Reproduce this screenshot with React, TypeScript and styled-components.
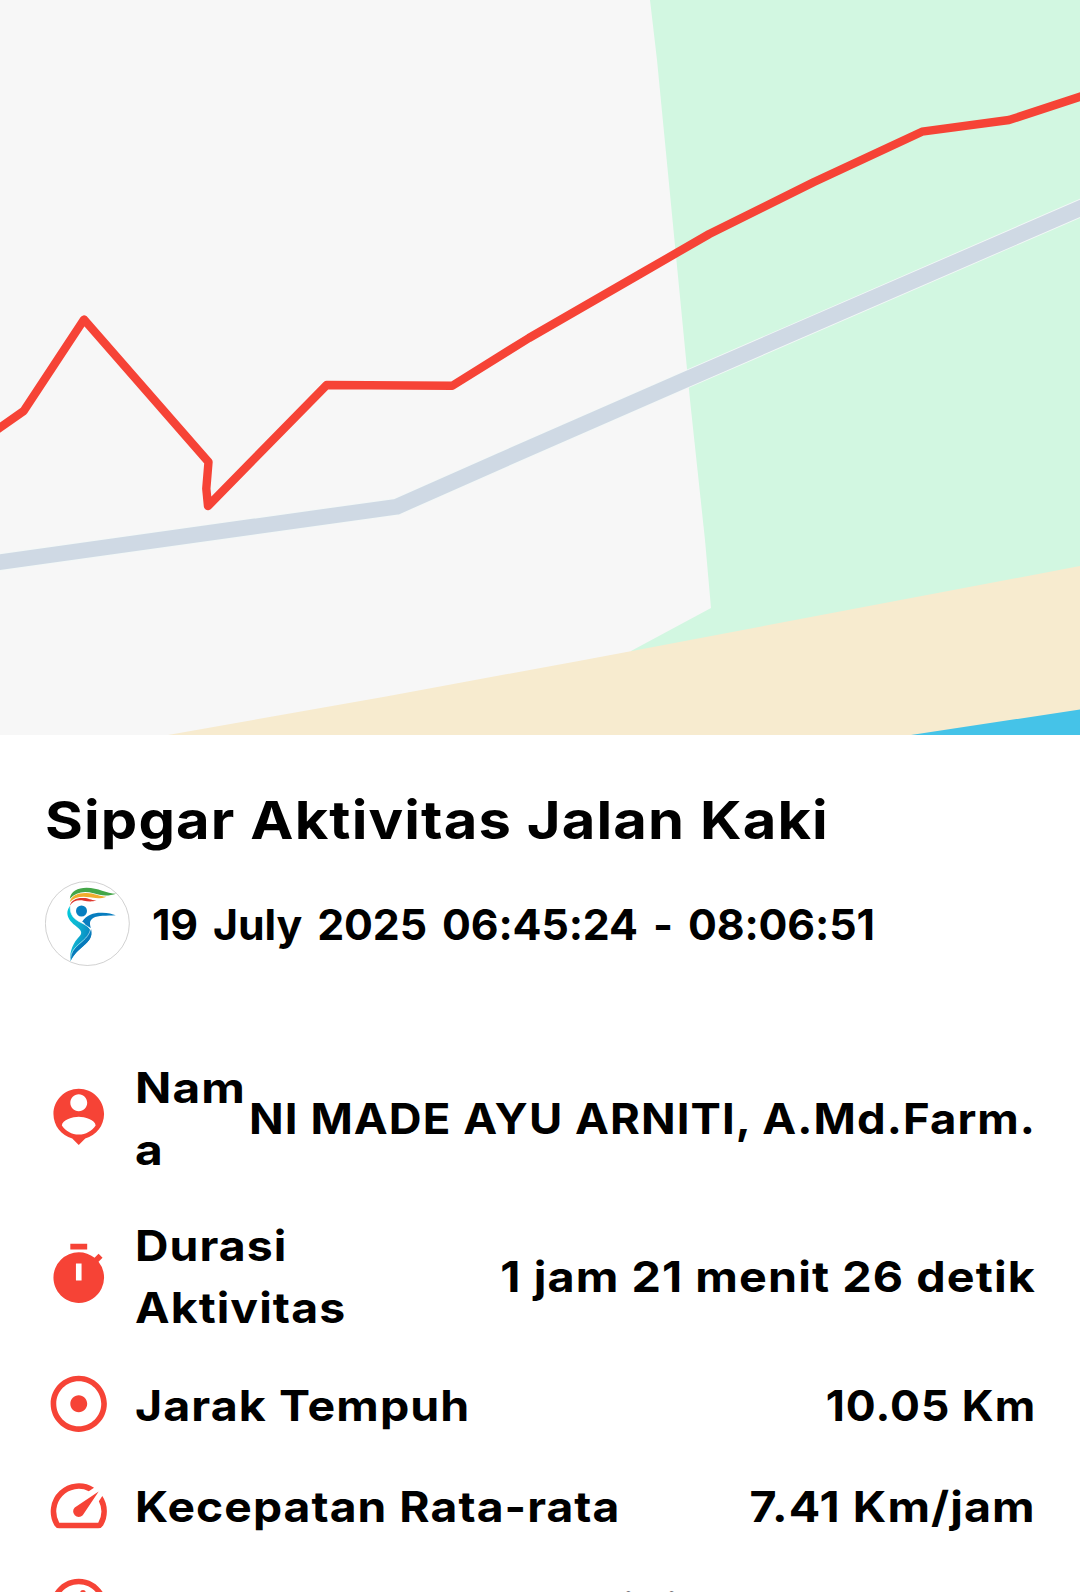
import styled, { createGlobalStyle } from "styled-components";
import type { IconType } from "react-icons";
import { MdAdjust, MdOutlineRunCircle, MdSpeed, MdTimer } from "react-icons/md";

const GlobalStyle = createGlobalStyle`
  * {
    box-sizing: border-box;
  }
  body {
    margin: 0;
    background: #ffffff;
    color: #000000;
    font-family: "Inter", "Liberation Sans", sans-serif;
    font-weight: 700;
    overflow: hidden;
  }
`;

const Screen = styled.main`
  display: flex;
  flex-direction: column;
  width: 1080px;
  height: 1592px;
  overflow: hidden;
`;

const Map = styled.svg`
  display: block;
  flex: none;
  width: 1080px;
  height: 735px;
  background: #f7f7f7;
`;

const Detail = styled.section`
  display: flex;
  flex-direction: column;
  padding: 50px 45px 0;
`;

const Title = styled.h1`
  margin: 0;
  font-size: 52.5px;
  line-height: 70px;
  letter-spacing: 1px;
  white-space: nowrap;
  transform: scaleX(1.103);
  transform-origin: left center;
`;

const DateRow = styled.div`
  display: flex;
  align-items: center;
  gap: 22px;
  height: 85px;
  margin-top: 26px;
`;

const Avatar = styled.svg`
  flex: none;
  width: 85px;
  height: 85px;
`;

const DateText = styled.time`
  font-size: 42.8px;
  line-height: 62px;
  letter-spacing: -0.1px;
  word-spacing: 5px;
  padding-top: 2px;
  white-space: nowrap;
`;

const StatList = styled.ul`
  display: flex;
  flex-direction: column;
  gap: 33.75px;
  margin: 88.75px 0 0;
  padding: 0;
  list-style: none;
`;

const StatRow = styled.li`
  display: flex;
  align-items: center;
  font-size: 42.8px;
  line-height: 62px;
  letter-spacing: 1px;

  svg {
    flex: none;
    width: 67.5px;
    height: 67.5px;
    margin-right: 22.5px;
    color: #f64336;
  }
`;

const Label = styled.span<{ $stretch: number; $width?: number }>`
  flex: none;
  width: ${(props) => (props.$width ? `${props.$width}px` : "auto")};
  overflow-wrap: anywhere;
  transform: translateY(2px) scaleX(${(props) => props.$stretch});
  transform-origin: left center;
`;

const Value = styled.span<{ $stretch: number }>`
  flex: none;
  margin-left: auto;
  margin-right: -1px;
  white-space: nowrap;
  transform: translateY(2px) scaleX(${(props) => props.$stretch});
  transform-origin: right center;
`;

const PersonPin = () => (
  <svg viewBox="0 0 24 24" fill="currentColor" aria-hidden="true">
    <path d="M12 2c-4.97 0-9 4.03-9 9 0 4.17 2.84 7.67 6.69 8.69L12 22l2.31-2.31C18.16 18.67 21 15.17 21 11c0-4.97-4.03-9-9-9zm0 2c1.66 0 3 1.34 3 3s-1.34 3-3 3-3-1.34-3-3 1.34-3 3-3zm0 14.3c-2.5 0-4.71-1.28-6-3.22.03-1.99 4-3.08 6-3.08 1.99 0 5.97 1.09 6 3.08-1.29 1.94-3.5 3.22-6 3.22z" />
  </svg>
);

interface IStat {
  icon: IconType;
  label: string;
  labelStretch: number;
  labelWidth?: number;
  value?: string;
  valueStretch?: number;
}

const stats: IStat[] = [
  {
    icon: PersonPin,
    label: "Nama",
    labelStretch: 1.115,
    labelWidth: 108,
    value: "NI MADE AYU ARNITI, A.Md.Farm.",
    valueStretch: 1.062,
  },
  {
    icon: MdTimer,
    label: "Durasi Aktivitas",
    labelStretch: 1.083,
    labelWidth: 300,
    value: "1 jam 21 menit 26 detik",
    valueStretch: 1.091,
  },
  {
    icon: MdAdjust,
    label: "Jarak Tempuh",
    labelStretch: 1.087,
    value: "10.05 Km",
    valueStretch: 1.036,
  },
  {
    icon: MdSpeed,
    label: "Kecepatan Rata-rata",
    labelStretch: 1.079,
    value: "7.41 Km/jam",
    valueStretch: 1.089,
  },
  {
    icon: MdOutlineRunCircle,
    label: "Jumlah Langkah Aktivitas",
    labelStretch: 1.098,
  },
];

const RouteMap = () => (
  <Map viewBox="0 0 1080 735" aria-label="Rute">
    <polygon
      fill="#d2f7e1"
      points="650,0 657,60 690,400 705,540 711,608 631,651 631,735 1080,735 1080,0"
    />
    <polygon
      fill="#f7ebcf"
      points="168,735 386,696.5 580,660.7 632,651 1080,566 1080,735"
    />
    <polygon fill="#45c3e8" points="911,735 1080,709.5 1080,735" />
    <g fill="none" strokeLinejoin="round">
      <polyline
        stroke="#f3f8f7"
        strokeWidth={17.5}
        points="-10,563.5 396.7,506.7 500,461 688.3,378.5 1090,204"
      />
      <polyline
        stroke="#cfd9e4"
        strokeWidth={15.8}
        points="-10,563.5 396.7,506.7 500,461 688.3,378.5 1090,204"
      />
      <polyline
        stroke="#f64336"
        strokeWidth={8.4}
        points="-10,434.5 23.7,411 84,319.5 208.5,462 206.3,488.7 208,506 326.7,385 452.3,385.7 529,338 640,274 709.3,234 813.5,182.3 922,131.7 1009,120 1090,93.5"
      />
    </g>
  </Map>
);

const Logo = () => (
  <Avatar viewBox="45 33 254 255" aria-hidden="true">
    <defs>
      <linearGradient id="body" x1="0" y1="0" x2="1" y2="0.5">
        <stop offset="0" stopColor="#00cbdc" />
        <stop offset="0.5" stopColor="#11b2d0" />
        <stop offset="1" stopColor="#0583c1" />
      </linearGradient>
    </defs>
    <circle cx="171.5" cy="160.5" r="126" fill="#fff" stroke="#a8a8a8" strokeWidth="1.6" />
    <path
      fill="#43a648"
      d="M119 86C121 64 143 53 169 53C205 53 228 70 258 71C235 79 211 77 190 70C161 62 137 67 119 86Z"
    />
    <path
      fill="#f1ad2d"
      d="M119 96C123 76 144 68 169 69C193 69 207 80 229 80C209 88 192 84 178 82C154 77 132 82 119 96Z"
    />
    <path
      fill="#df352c"
      d="M119 107C123 91 139 83 160 84C176 84 184 92 199 91C184 97 172 94 161 92C142 89 128 93 119 107Z"
    />
    <circle cx="154" cy="123" r="16.5" fill="#087fc0" />
    <path
      fill="#087dbf"
      d="M156 155C169 133 194 127 216 128C234 128 247 132 257 136C229 138 204 136 189 144C178 151 178 160 182 174L166 166C164 160 161 157 156 155Z"
    />
    <path
      fill="url(#body)"
      d="M120 107C118 136 133 148 153 158C174 169 185 178 183 195C181 209 169 220 156 231C142 243 131 254 121 273C117 243 130 218 148 199C159 186 151 179 136 167C118 153 101 131 120 107Z"
    />
    <path
      fill="#087abb"
      d="M183 178C188 201 177 213 159 229C142 244 131 253 121 273C120 258 125 247 136 235C153 218 173 208 179 184Z"
    />
    <path
      fill="none"
      stroke="#e4f7fb"
      strokeWidth="1.8"
      d="M120 107C118 136 133 148 153 158C169 166 177 171 181 179C173 208 148 216 132 237C124 247 121 259 121 271"
    />
  </Avatar>
);

const App = () => {
  return (
    <>
      <GlobalStyle />
      <Screen>
        <RouteMap />
        <Detail>
          <Title>Sipgar Aktivitas Jalan Kaki</Title>
          <DateRow>
            <Logo />
            <DateText>19 July 2025 06:45:24 - 08:06:51</DateText>
          </DateRow>
          <StatList>
            {stats.map(({ icon: Icon, ...stat }) => (
              <StatRow key={stat.label}>
                <Icon />
                <Label $stretch={stat.labelStretch} $width={stat.labelWidth}>
                  {stat.label}
                </Label>
                {stat.value ? (
                  <Value $stretch={stat.valueStretch ?? 1}>{stat.value}</Value>
                ) : null}
              </StatRow>
            ))}
          </StatList>
        </Detail>
      </Screen>
    </>
  );
};

export default App;
